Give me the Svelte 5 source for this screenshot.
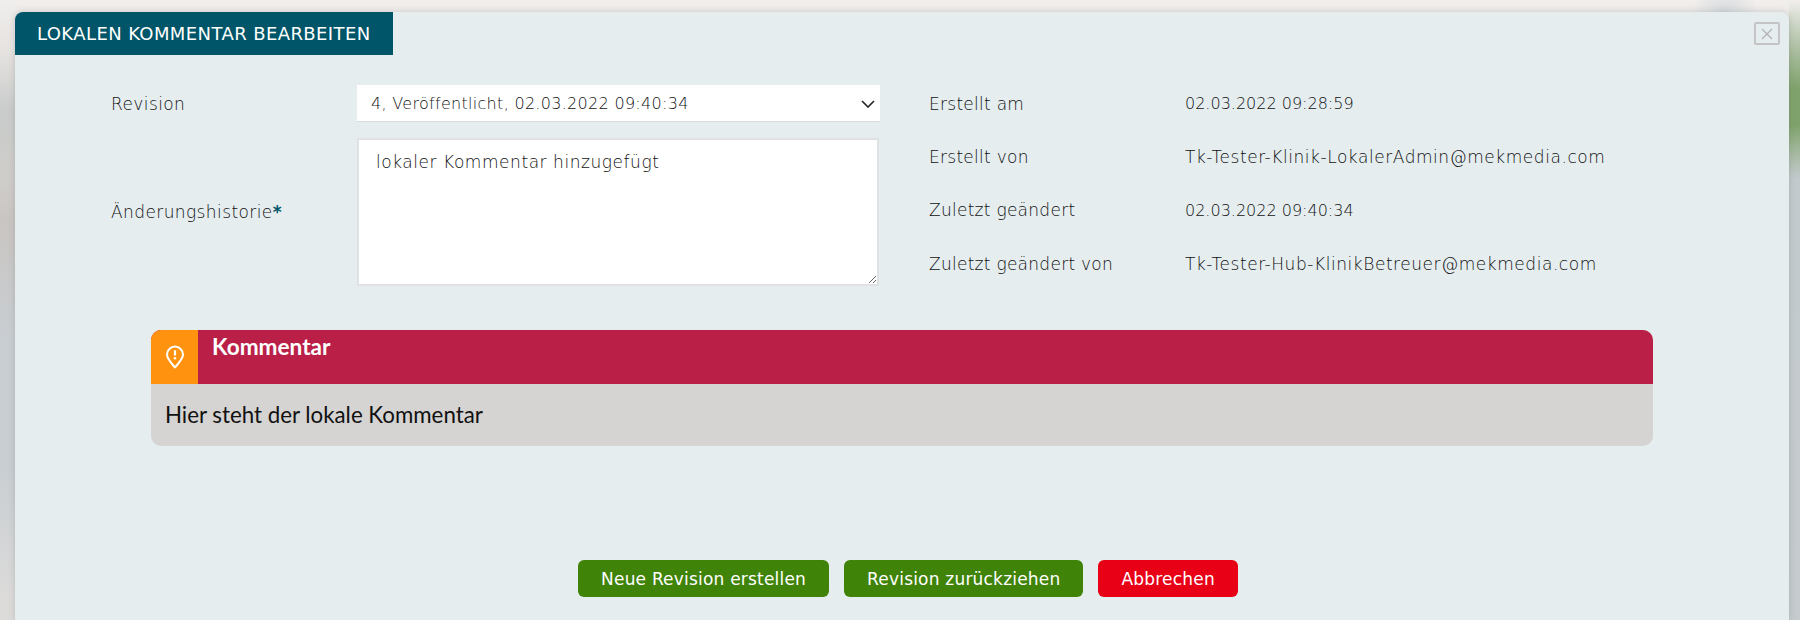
<script>
	const meta = [
		{ label: 'Erstellt am', value: '02.03.2022 09:28:59', date: true },
		{ label: 'Erstellt von', value: 'Tk-Tester-Klinik-LokalerAdmin@mekmedia.com' },
		{ label: 'Zuletzt geändert', value: '02.03.2022 09:40:34', date: true },
		{ label: 'Zuletzt geändert von', value: 'Tk-Tester-Hub-KlinikBetreuer@mekmedia.com' }
	];
</script>

<div class="page">
	<section class="dialog">
		<header class="head">
			<h1>LOKALEN KOMMENTAR BEARBEITEN</h1>
			<button class="close" aria-label="Schließen">
				<svg width="14" height="14" viewBox="0 0 14 14"><path d="M2 2l10 10M12 2L2 12" stroke="#b5b5b5" stroke-width="1.4" fill="none" /></svg>
			</button>
		</header>

		<div class="form">
			<div class="fields">
				<label class="lbl" for="rev">Revision</label>
				<div class="select-wrap">
					<select id="rev">
						<option>4, Veröffentlicht, 02.03.2022 09:40:34</option>
					</select>
					<svg class="chevron" width="14" height="8" viewBox="0 0 14 8"><path d="M1 1l6 6 6-6" stroke="#222" stroke-width="1.6" fill="none" /></svg>
				</div>
				<label class="lbl" for="hist">Änderungshistorie<span class="req">*</span></label>
				<textarea id="hist">lokaler Kommentar hinzugefügt</textarea>
			</div>

			<dl class="meta">
				{#each meta as m}
					<dt>{m.label}</dt>
					<dd class:date={m.date}>{m.value}</dd>
				{/each}
			</dl>
		</div>

		<div class="alert">
			<div class="alert-head">
				<div class="alert-icon">
					<svg width="20" height="24" viewBox="0 0 20 24">
						<path d="M10 22.5C6 17.5 2 14 2 9.6a8 8 0 0 1 16 0C18 14 14 17.5 10 22.5z" stroke="#fff" stroke-width="2" fill="none" stroke-linejoin="round" />
						<path d="M10 5.2v5.2" stroke="#fff" stroke-width="2.2" />
						<circle cx="10" cy="13.2" r="1.3" fill="#fff" />
					</svg>
				</div>
				<h2>Kommentar</h2>
			</div>
			<p>Hier steht der lokale Kommentar</p>
		</div>

		<div class="actions">
			<button class="btn green">Neue Revision erstellen</button>
			<button class="btn green">Revision zurückziehen</button>
			<button class="btn red">Abbrechen</button>
		</div>
	</section>
</div>

<style>
	:global(body) {
		margin: 0;
	}

	/* blurred page behind the modal */
	.page {
		height: 620px;
		box-sizing: border-box;
		padding: 12px 11px 0 15px;
		overflow: hidden;
		font-family: "DejaVu Sans", Inter, sans-serif;
		font-weight: 300;
		background:
			radial-gradient(ellipse 34px 26px at 1725px 14px, #d3d8dc 0%, rgba(211, 216, 220, 0) 100%),
			linear-gradient(180deg, rgba(240, 238, 236, 0) 0, #7fa26c 90px, #7fa26c 125px, rgba(192, 201, 207, 0) 180px) right top / 11px 100% no-repeat,
			linear-gradient(180deg, #f0eeec 0, #e6e3e1 50px, #c9cccb 110px, #cfcdca 180px, #c9c5c2 220px, #c9ced2 340px, #c9ced2 470px, #dcdbda 600px) left top / 15px 100% no-repeat,
			linear-gradient(180deg, #f1eeec 0, #c3cace 180px, #c5cbce 100%);
	}

	.dialog {
		height: 608px;
		box-sizing: border-box;
		background: #e5edef;
		border-radius: 8px 8px 0 0;
		box-shadow: 0 0 6px rgba(90, 90, 90, 0.25);
		color: #111;
	}

	.head {
		display: flex;
		justify-content: space-between;
		align-items: flex-start;
	}

	h1 {
		margin: 0;
		width: 378px;
		height: 43px;
		box-sizing: border-box;
		padding-left: 22px;
		border-radius: 8px 0 0 0;
		background: #005568;
		color: #fff;
		font-size: 18px;
		font-weight: 400;
		letter-spacing: 0.4px;
		line-height: 43px;
		white-space: nowrap;
	}

	.close {
		display: flex;
		align-items: center;
		justify-content: center;
		width: 26px;
		height: 23px;
		margin: 10px 9px 0 0;
		padding: 0;
		background: none;
		border: 2px solid #c4c4c4;
		border-radius: 2px;
	}

	.form {
		display: flex;
		margin-top: 30px;
		padding-left: 96px;
		height: 201px;
		font-size: 17px;
		letter-spacing: 0.55px;
	}

	.fields {
		display: grid;
		grid-template-columns: 246px 523px;
		grid-template-rows: 37px 148px;
		row-gap: 16px;
		align-items: center;
	}

	.lbl {
		letter-spacing: 0.4px;
	}

	.req {
		color: #005568;
		font-weight: 700;
	}

	.select-wrap {
		position: relative;
		height: 37px;
	}

	select {
		appearance: none;
		display: block;
		width: 100%;
		height: 37px;
		padding: 0 0 0 14px;
		border: 0;
		border-bottom: 1px solid #d8dcdd;
		border-radius: 0;
		background: #fff;
		color: #111;
		font: inherit;
		font-size: 16px;
		letter-spacing: 0.3px;
	}

	.chevron {
		position: absolute;
		right: 5px;
		top: 15px;
	}

	textarea {
		display: block;
		width: 522px;
		height: 148px;
		box-sizing: border-box;
		padding: 12px 17px;
		border: 2px solid #dfe1e2;
		border-radius: 0;
		background: #fff;
		color: #111;
		font: inherit;
		letter-spacing: inherit;
		outline: none;
	}

	.meta {
		display: grid;
		grid-template-columns: 256px auto;
		grid-auto-rows: 53.4px;
		margin: -8px 0 0 49px;
		align-content: start;
		align-items: center;
	}

	dt,
	dd {
		margin: 0;
		white-space: nowrap;
	}

	dt {
		letter-spacing: 0.27px;
	}

	/* digits run wide in this font */
	.date {
		font-size: 16px;
		letter-spacing: 0;
	}

	.alert {
		margin: 44px 136px 0 136px;
		border-radius: 10px;
		overflow: hidden;
		background: #d5d4d2;
		font-family: Lato, "Liberation Sans", sans-serif;
	}

	.alert-head {
		display: flex;
		height: 54px;
		background: #ba1f47;
	}

	.alert-icon {
		display: flex;
		align-items: center;
		justify-content: center;
		width: 47px;
		background: #ff930f;
	}

	h2 {
		margin: 0;
		padding: 4px 0 0 14px;
		color: #fff;
		font-size: 22.6px;
		font-weight: 700;
		line-height: 26px;
	}

	.alert p {
		margin: 0;
		padding: 16px 14px 17px;
		color: #111;
		font-size: 22.3px;
		font-weight: 400;
		line-height: 29px;
	}

	.actions {
		display: flex;
		justify-content: center;
		gap: 15px;
		margin-top: 114px;
		padding-left: 12px;
	}

	.btn {
		height: 37px;
		padding: 0 23px;
		border: 0;
		border-radius: 6px;
		color: #fff;
		font: inherit;
		font-size: 17px;
		font-weight: 400;
		letter-spacing: 0.2px;
	}

	.green {
		background: #408309;
	}

	.red {
		background: #e80016;
	}
</style>
